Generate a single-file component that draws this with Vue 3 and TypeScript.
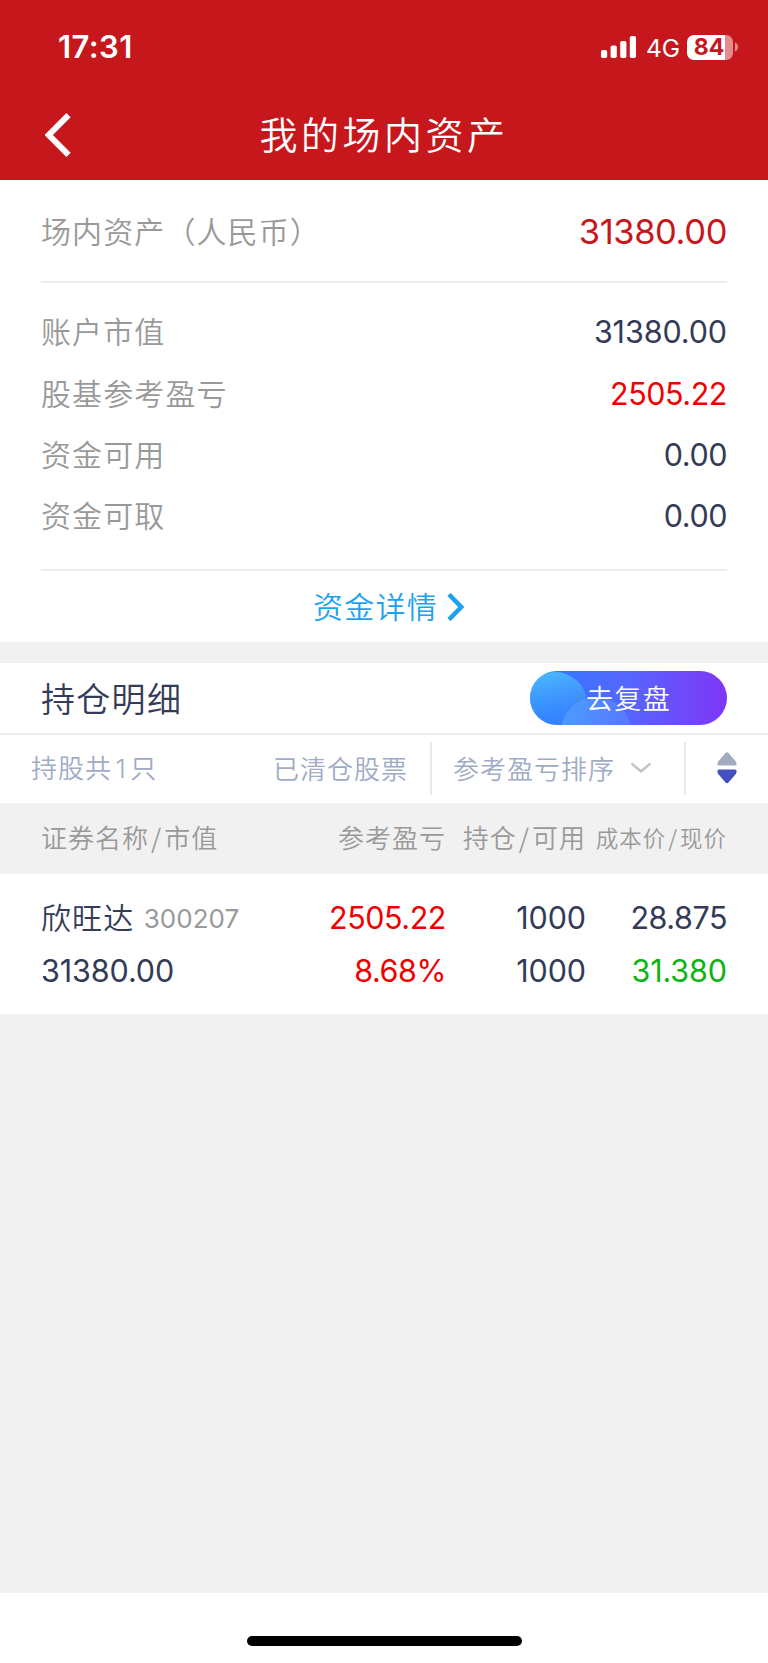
<script setup lang="ts">
interface Row {
  label: string
  value: string
  up?: boolean
}

const accountRows: Row[] = [
  { label: '账户市值', value: '31380.00' },
  { label: '股基参考盈亏', value: '2505.22', up: true },
  { label: '资金可用', value: '0.00' },
  { label: '资金可取', value: '0.00' },
]

const signalBars: { x: number; h: number }[] = [
  { x: 0, h: 8 },
  { x: 9.6, h: 12.5 },
  { x: 19.2, h: 17 },
  { x: 28.8, h: 22 },
]

// Figures without the narrow digit 1 are set slightly tighter.
const isTight = (value: string): boolean => !value.includes('1')
</script>

<template>
  <div class="screen">
    <header class="top">
      <div class="status">
        <span class="time">17:31</span>
        <div class="indicators">
          <svg class="signal" width="36" height="22" viewBox="0 0 36 22">
            <rect v-for="b in signalBars" :key="b.x" :x="b.x" :y="22 - b.h" width="6.2" :height="b.h" rx="1.8" fill="#fff" />
          </svg>
          <span class="network">4G</span>
          <div class="battery">
            <span class="level">84</span>
            <svg class="cap" width="3" height="10" viewBox="0 0 3 10"><path d="M0 0.5Q3 2 3 5T0 9.5Z" fill="#e68a8d" /></svg>
          </div>
        </div>
      </div>
      <nav class="nav">
        <svg class="back" width="26" height="44" viewBox="0 0 26 44">
          <path d="M23.5 2.2L3.8 22L23.5 41.8" fill="none" stroke="#fff" stroke-width="6" />
        </svg>
        <h1>我的场内资产</h1>
      </nav>
    </header>

    <section class="assets">
      <div class="total">
        <span class="label">场内资产（人民币）</span>
        <span class="num total-num">31380.00</span>
      </div>
      <div class="rows">
        <div v-for="r in accountRows" :key="r.label" class="row">
          <span class="label">{{ r.label }}</span>
          <span class="num" :class="{ up: r.up, tight: isTight(r.value) }">{{ r.value }}</span>
        </div>
      </div>
      <a class="detail">
        <span>资金详情</span>
        <svg width="18" height="28" viewBox="0 0 18 28">
          <path d="M2 1.5L14.2 14L2 26.5" fill="none" stroke="#1ca2ee" stroke-width="4.6" />
        </svg>
      </a>
    </section>

    <section class="positions">
      <div class="heading">
        <h2>持仓明细</h2>
        <button class="review">
          <svg class="bubbles" width="197" height="54" viewBox="0 0 197 54">
            <defs>
              <linearGradient id="g1" x1="0.4" y1="0" x2="0.6" y2="1">
                <stop offset="0" stop-color="#4fc3ff" stop-opacity=".85" />
                <stop offset="1" stop-color="#2f7dff" stop-opacity=".4" />
              </linearGradient>
              <linearGradient id="g2" x1="0" y1="0" x2="1" y2="0">
                <stop offset="0" stop-color="#4d9bff" stop-opacity=".95" />
                <stop offset="1" stop-color="#5f92ff" stop-opacity=".4" />
              </linearGradient>
            </defs>
            <circle cx="25" cy="33" r="32" fill="url(#g1)" />
            <circle cx="66" cy="61" r="35" fill="url(#g2)" />
          </svg>
          <span>去复盘</span>
        </button>
      </div>
      <div class="filters">
        <span class="count">持股共<i>1</i>只</span>
        <span class="cleared">已清仓股票</span>
        <div class="sort">
          <span>参考盈亏排序</span>
          <svg width="22" height="12" viewBox="0 0 22 12">
            <path d="M1.5 1.5L11 9.3L20.5 1.5" fill="none" stroke="#c4c5ca" stroke-width="2.6" />
          </svg>
        </div>
        <div class="order">
          <svg width="20" height="32" viewBox="0 0 20 32">
            <path d="M8.3 1.2Q10 -.6 11.7 1.2L19 9.8Q20.6 13.5 18 13.5H2Q-.6 13.5 1 9.8Z" fill="#a0abc1" />
            <path d="M8.3 30.3Q10 32.1 11.7 30.3L19 21.7Q20.6 17.5 18 17.5H2Q-.6 17.5 1 21.7Z" fill="#444fc2" />
          </svg>
        </div>
      </div>
      <div class="grid table-head">
        <span>证券名称<i>/</i>市值</span>
        <span>参考盈亏</span>
        <span>持仓<i>/</i>可用</span>
        <span class="small">成本价<i>/</i>现价</span>
      </div>
      <div class="grid table-row">
        <div class="name"><span class="cn">欣旺达</span><span class="code">300207</span></div>
        <span class="num up tight">2505.22</span>
        <span class="num">1000</span>
        <span class="num tight">28.875</span>
        <span class="num">31380.00</span>
        <span class="num up tight">8.68%</span>
        <span class="num">1000</span>
        <span class="num down">31.380</span>
      </div>
    </section>

    <footer class="home"><div class="bar"></div></footer>
  </div>
</template>

<style>
body { margin: 0; }
</style>

<style scoped>
.screen {
  width: 768px;
  height: 1663px;
  display: flex;
  flex-direction: column;
  background: #f1f1f1;
  color: #333b57;
  font-family: "Noto Sans CJK SC", sans-serif;
  font-weight: 350;
  overflow: hidden;
}
* { box-sizing: border-box; }
h1, h2 { margin: 0; font-weight: 350; }
i { font-style: normal; }
svg { display: block; flex: none; }

.top { height: 180px; flex: none; background: #c6171c; color: #fff; }
.status { height: 94px; display: flex; justify-content: space-between; padding: 0 30px 0 58px; align-items: center; font-family: Inter, sans-serif; }
.time { font-size: 31px; font-weight: 600; line-height: 36px; letter-spacing: 0.4px; }
.indicators { display: flex; align-items: center; }
.network { font-size: 24.5px; font-weight: 400; line-height: 30px; margin: 2px 0 0 9px; width: 41px; }
.battery { display: flex; align-items: center; gap: 2px; }
.level {
  width: 46px; height: 25px; border-radius: 7px; color: #c6171c;
  background: linear-gradient(90deg, #fff 38px, #e68a8d 38px);
  font-size: 23px; font-weight: 700; line-height: 25px; text-align: center; padding-right: 2px;
}
.nav { position: relative; height: 86px; display: flex; align-items: center; justify-content: center; }
.back { position: absolute; left: 45px; top: 19px; }
h1 { font-size: 38px; line-height: 50px; letter-spacing: 3.5px; padding-bottom: 8px; }

.assets { height: 462px; flex: none; background: #fff; padding: 0 41px; }
.label { color: #999; font-size: 30px; line-height: 40px; letter-spacing: 1.1px; padding-bottom: 3px; }
.num { font-family: Inter, sans-serif; font-weight: 400; font-size: 30.5px; line-height: 40px; letter-spacing: -0.1px; padding-top: 1px; }
.tight { letter-spacing: -0.45px; }
.total { height: 103px; display: flex; align-items: center; justify-content: space-between; border-bottom: 2px solid #eee; padding-top: 2px; }
.total-num { color: #c6171c; font-size: 34.5px; letter-spacing: -0.4px; }
.rows { height: 288px; padding-top: 18px; border-bottom: 2px solid #eee; }
.row { height: 61.4px; display: flex; align-items: center; justify-content: space-between; }
.up { color: #f00000; }
.down { color: #0cb414; }
.detail { height: 71px; display: flex; align-items: center; justify-content: center; color: #1ca2ee; font-size: 30px; line-height: 40px; letter-spacing: 1.2px; gap: 9px; padding-left: 10px; }
.detail span { padding-bottom: 3px; }

.positions { margin-top: 21px; background: #fff; flex: none; }
.heading { height: 72px; display: flex; align-items: center; justify-content: space-between; padding: 0 41px; border-bottom: 2px solid #ebecf1; }
h2 { font-size: 34px; line-height: 44px; letter-spacing: 1.3px; }
.review {
  position: relative; width: 197px; height: 54px; border: 0; padding: 0 0 1px; border-radius: 27px; overflow: hidden;
  background: linear-gradient(90deg, #2a7bff, #5566ff 50%, #7f35f7);
  color: #fff; font: 350 27px/36px "Noto Sans CJK SC", sans-serif; letter-spacing: 1.4px;
}
.bubbles { position: absolute; left: 0; top: 0; }
.review span { position: relative; }
.filters { height: 68px; display: flex; align-items: center; color: #a0abc5; font-size: 26px; line-height: 36px; letter-spacing: 1px; padding-bottom: 2px; }
.count { margin-left: 31px; width: 242px; }
.count i { font-family: Inter, sans-serif; margin: 0 3.5px; }
.cleared { width: 157px; }
.sort { height: 53px; border-left: 2px solid #e4e8f0; border-right: 2px solid #e4e8f0; width: 256px; display: flex; align-items: center; padding-left: 21px; gap: 15px; }
.order { flex: 1; display: flex; padding-left: 31px; }

.grid { display: grid; grid-template-columns: 259px 146px 140px 141px; padding: 0 41px; }
.grid > :not(:nth-child(4n + 1)) { text-align: right; }
.table-head { height: 71px; background: #f1f1f1; color: #999; align-items: center; font-size: 26px; line-height: 36px; letter-spacing: 1px; padding-bottom: 3px; }
.table-head i { margin: 0 2px; }
.table-head .small { font-size: 22.5px; }
.table-row { height: 140px; padding-top: 17px; grid-template-rows: 53px 53px; align-items: center; }
.name { display: flex; align-items: center; white-space: nowrap; }
.cn { font-size: 30px; line-height: 40px; letter-spacing: 1.1px; padding-bottom: 3px; }
.code { font-family: Inter, sans-serif; font-weight: 400; font-size: 26px; color: #999; margin-left: 9.5px; padding-top: 1px; }

.home { margin-top: auto; height: 70px; background: #fff; display: flex; justify-content: center; padding-top: 43px; }
.bar { width: 275px; height: 10px; border-radius: 5px; background: #000; }
</style>
